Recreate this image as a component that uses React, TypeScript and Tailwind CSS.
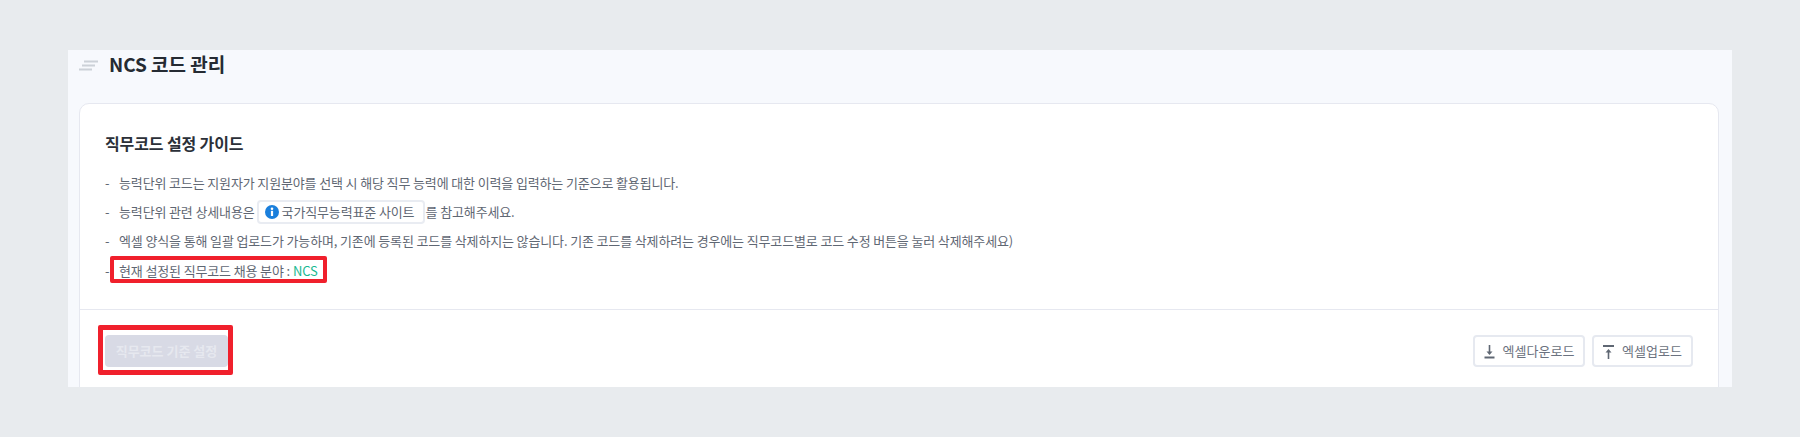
import React from "react";

const font = { fontFamily: '"Noto Sans CJK KR", "Noto Sans", sans-serif' };

function Line({ children }: { children: React.ReactNode }) {
  return (
    <li className="flex items-center h-[29px] text-[13px] tracking-[-0.14px] text-[#5f6773]">
      <span className="w-[14px] shrink-0">-</span>
      {children}
    </li>
  );
}

export default function App() {
  return (
    <div className="h-[437px] bg-[#e8ebee] pt-[50px] pl-[68px] pr-[68px] overflow-hidden" style={font}>
      <div className="h-[337px] bg-[#f7f9fd] pl-[11px] pr-[13px] overflow-hidden">
        <div className="flex items-center h-[30px]">
          <svg width="20" height="12" viewBox="0 0 20 12" className="mt-[1px]">
            <path d="M5 1.5H19M3 5.5H16M0 9.5H13" stroke="#ccd1d8" strokeWidth="2" fill="none" />
          </svg>
          <h1 className="ml-[10px] mb-[3px] text-[19px] tracking-[-0.05px] font-bold text-[#252b33] leading-none">NCS 코드 관리</h1>
        </div>
        <div className="mt-[23px] bg-white border border-[#e6e8f0] rounded-t-[10px] h-[300px]">
          <div className="h-[206px] border-b border-[#e6e8f0] pl-[25px] pt-[27px]">
            <h2 className="text-[16px] tracking-[-0.12px] font-bold text-[#2b3038] leading-[24px]">직무코드 설정 가이드</h2>
            <ul className="mt-[13px]">
              <Line>능력단위 코드는 지원자가 지원분야를 선택 시 해당 직무 능력에 대한 이력을 입력하는 기준으로 활용됩니다.</Line>
              <Line>
                능력단위 관련 상세내용은
                <span className="ml-[2px] mr-[1px] inline-flex items-center h-[24px] w-[168px] border-2 border-[#e9ecf2] rounded-[4px] pl-[6px]">
                  <svg width="14" height="14" viewBox="0 0 14 14" className="mr-[3px] shrink-0">
                    <circle cx="7" cy="7" r="7" fill="#1a7fdc" />
                    <circle cx="7" cy="3.8" r="1.3" fill="#fff" />
                    <rect x="5.9" y="5.8" width="2.2" height="5.2" fill="#fff" />
                  </svg>
                  국가직무능력표준 사이트
                </span>
                를 참고해주세요.
              </Line>
              <Line>엑셀 양식을 통해 일괄 업로드가 가능하며, 기존에 등록된 코드를 삭제하지는 않습니다. 기존 코드를 삭제하려는 경우에는 직무코드별로 코드 수정 버튼을 눌러 삭제해주세요)</Line>
              <li className="relative mt-[1px] flex items-center h-[29px] text-[13px] tracking-[-0.14px] text-[#5f6773]">
                <span className="w-[14px] shrink-0">-</span>
                현재 설정된 직무코드 채용 분야 : <span className="ml-[3px] text-[#17b890]">NCS</span>
                <span className="absolute left-[5px] top-[0px] w-[217px] h-[27px] border-[4px] border-[#f0202c] rounded-[2px]" />
              </li>
            </ul>
          </div>
          <div className="flex items-start justify-between pt-[25px] pl-[25px] pr-[25px]">
            <div className="relative">
              <button className="w-[123px] h-[32px] rounded-[4px] bg-[#d8dae5] text-[13px] font-bold text-[#e6e8ef]">직무코드 기준 설정</button>
              <span className="absolute left-[-7px] top-[-10px] w-[135px] h-[50px] border-[5px] border-[#f0202c] rounded-[2px]" />
            </div>
            <div className="flex gap-[7px]">
              <button className="flex items-center justify-center gap-[8px] w-[112px] h-[32px] rounded-[4px] border-2 border-[#e6e9f0] bg-white text-[13px] text-[#6b7280]">
                <svg width="11" height="14" viewBox="0 0 11 14" className="mt-[2px]">
                  <path d="M5.5 0V7" stroke="#5f6773" strokeWidth="1.6" fill="none" />
                  <path d="M2.5 6.5H8.5L5.5 10Z" fill="#5f6773" />
                  <path d="M0.5 12.5H10.5" stroke="#5f6773" strokeWidth="2" />
                </svg>
                엑셀다운로드
              </button>
              <button className="flex items-center justify-center gap-[8px] w-[101px] h-[32px] rounded-[4px] border-2 border-[#e6e9f0] bg-white text-[13px] text-[#6b7280]">
                <svg width="11" height="14" viewBox="0 0 11 14" className="mt-[1px]">
                  <path d="M0 1H11" stroke="#5f6773" strokeWidth="2" />
                  <path d="M5.5 14V7" stroke="#5f6773" strokeWidth="1.6" fill="none" />
                  <path d="M5.5 4L2.5 7.5H8.5Z" fill="#5f6773" />
                </svg>
                엑셀업로드
              </button>
            </div>
          </div>
        </div>
      </div>
    </div>
  );
}
